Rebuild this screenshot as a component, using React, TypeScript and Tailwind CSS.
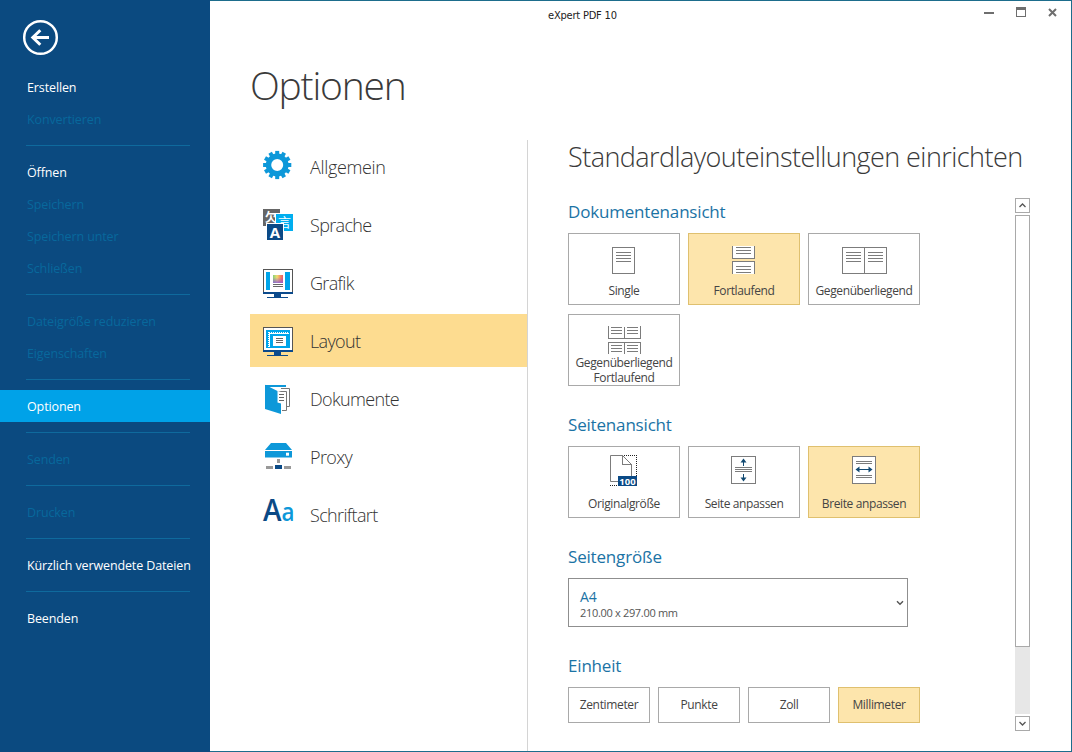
import type { ReactNode } from "react";
import { clsx } from "clsx";

type MenuEntry = {
  label: string;
  state?: "disabled" | "active";
};

const menuGroups: MenuEntry[][] = [
  [{ label: "Erstellen" }, { label: "Konvertieren", state: "disabled" }],
  [
    { label: "Öffnen" },
    { label: "Speichern", state: "disabled" },
    { label: "Speichern unter", state: "disabled" },
    { label: "Schließen", state: "disabled" },
  ],
  [
    { label: "Dateigröße reduzieren", state: "disabled" },
    { label: "Eigenschaften", state: "disabled" },
  ],
  [{ label: "Optionen", state: "active" }],
  [{ label: "Senden", state: "disabled" }],
  [{ label: "Drucken", state: "disabled" }],
  [{ label: "Kürzlich verwendete Dateien" }],
  [{ label: "Beenden" }],
];

const Sidebar = () => (
  <aside className="w-[210px] shrink-0 bg-[#0b4a80] text-[12.5px] tracking-[-0.12px] text-white">
    <button className="block pl-[22px] pt-[19px]">
      <svg width="37" height="37" viewBox="0 0 37 37" fill="none" stroke="#fff">
        <circle cx="18.5" cy="18.5" r="16.3" strokeWidth="2.5" />
        <path d="M27 18.5H11M18.3 11.2L10.8 18.5L18.3 25.8" strokeWidth="3" />
      </svg>
    </button>
    <nav className="mt-[15px]">
      {menuGroups.map((group, i) => (
        <div key={i}>
          {i > 0 && (
            <div className="flex h-[21px] items-center pl-[26px]">
              <div className="h-px w-[164px] bg-[#0f6a9d]" />
            </div>
          )}
          {group.map((entry) => (
            <div
              key={entry.label}
              className={clsx(
                "flex h-8 items-center whitespace-nowrap pl-[27px] pt-0.5",
                entry.state === "disabled" && "text-[#08689c]",
                entry.state === "active" && "bg-[#00a2e8]"
              )}
            >
              {entry.label}
            </div>
          ))}
        </div>
      ))}
    </nav>
  </aside>
);

const teeth = [0, 30, 60, 90, 120, 150, 180, 210, 240, 270, 300, 330];

const GearIcon = () => (
  <>
    <circle cx="15.2" cy="25" r="8.7" fill="none" stroke="#0d98d9" strokeWidth="5.4" />
    {teeth.map((a) => (
      <rect key={a} x="13.2" y="10.9" width="4" height="4" fill="#0d98d9" transform={`rotate(${a} 15.2 25)`} />
    ))}
  </>
);

const LanguageIcon = () => (
  <>
    <path fill="#666" d="M1 11h17v17H1z" />
    <text x="3" y="24" fontSize="12" fontWeight="700" fill="#fff" fontFamily="Noto Sans CJK SC, sans-serif">
      欠
    </text>
    <path fill="#fff" d="M13 15h19v19H13z" />
    <path fill="#00aeef" d="M14 16h17v17H14z" />
    <text x="16" y="28.5" fontSize="13" fill="#fff" fontFamily="Noto Sans CJK SC, sans-serif">
      言
    </text>
    <path fill="#fff" d="M4 25h18v18H4z" />
    <path fill="#0b4a86" d="M5 26h16v16H5z" />
    <text x="13" y="39.5" fontSize="15" fontWeight="700" fill="#fff" textAnchor="middle">
      A
    </text>
  </>
);

const Monitor = ({ children }: { children: ReactNode }) => (
  <g shapeRendering="crispEdges">
    <path fill="#555" d="M1 13h30v25H1z" />
    <path fill="#fff" d="M2 14h28v22H2z" />
    <path fill="#00a5ea" d="M4 16h24v18H4z" />
    <path fill="#0b4a8c" d="M1 36h30v2H1zM12 38h7v3h-7zM5 41h21v1H5z" />
    {children}
  </g>
);

const GraphicsIcon = () => (
  <Monitor>
    <defs>
      <linearGradient id="hue">
        <stop offset="0" stopColor="#86d07a" />
        <stop offset="0.4" stopColor="#f0dc70" />
        <stop offset="0.75" stopColor="#f58a60" />
        <stop offset="1" stopColor="#ea5a70" />
      </linearGradient>
      <linearGradient id="shade" x1="0" y1="0" x2="0" y2="1">
        <stop offset="0.3" stopColor="#a04fd0" stopOpacity="0" />
        <stop offset="1" stopColor="#8a5cd8" stopOpacity="0.85" />
      </linearGradient>
    </defs>
    <path fill="#fff" d="M8 16h15v18H8z" />
    <path fill="url(#hue)" d="M11 19h10v8H11z" />
    <path fill="url(#shade)" d="M11 19h10v8H11z" />
    <path fill="#666" d="M11 28h10v1H11zM11 30h10v1H11z" />
  </Monitor>
);

const LayoutIcon = () => (
  <Monitor>
    <path d="M7 18.5h20" stroke="#fff" strokeDasharray="1 1" />
    <path d="M6.5 18v15" stroke="#fff" strokeDasharray="1 1" />
    <path d="M7.5 33V19.5H27" stroke="#fff" fill="none" />
    <path fill="#fff" d="M11 22h13v10H11z" />
    <path fill="#666" d="M14 24h7v1h-7zM14 26h7v1h-7zM14 28h7v1h-7z" />
  </Monitor>
);

const DocumentsIcon = () => (
  <>
    <path fill="#0d98d9" d="M3 13h21v2H3z" />
    <path fill="none" stroke="#777" d="M19 16.5h8.500v18H25" />
    <path fill="#fff" stroke="#777" d="M15 19.5h9.500v19H20" />
    <path fill="#fff" d="M4 15l15 5v5H4z" />
    <path stroke="#666" d="M17 22.5h5M17 25.5h5M17 28.5h5" />
    <path fill="#0d98d9" d="M3 12.700L15.500 19v11.500L19 31.500V42L3 37z" />
  </>
);

const ProxyIcon = () => (
  <>
    <path fill="#0d98d9" d="M9 13h15l6 7H3zM3 21h27v6.500H3z" />
    <path fill="#fff" d="M24 22.700h3v3h-3z" />
    <path fill="#999" d="M15 29h3v4h-3zM4 36h7v3H4zM22 36h7v3h-7z" />
    <path fill="#0b4a86" d="M13 35h7v4h-7z" />
  </>
);

const FontIcon = () => (
  <>
    <text x="1" y="32.5" fontSize="30" fontWeight="600" fill="#0b4a86" textLength="18.5" lengthAdjust="spacingAndGlyphs">
      A
    </text>
    <text x="19.5" y="32.5" fontSize="26" fontWeight="600" fill="#0d98d9" textLength="13" lengthAdjust="spacingAndGlyphs">
      a
    </text>
  </>
);

const categories = [
  { label: "Allgemein", icon: <GearIcon /> },
  { label: "Sprache", icon: <LanguageIcon /> },
  { label: "Grafik", icon: <GraphicsIcon /> },
  { label: "Layout", icon: <LayoutIcon />, active: true },
  { label: "Dokumente", icon: <DocumentsIcon /> },
  { label: "Proxy", icon: <ProxyIcon /> },
  { label: "Schriftart", icon: <FontIcon /> },
];

const CategoryList = () => (
  <ul className="flex w-[278px] shrink-0 flex-col gap-[5px] border-r border-[#d4d4d4]">
    {categories.map(({ label, icon, active }) => (
      <li key={label} className={clsx("flex h-[53px] items-center pl-3", active && "bg-[#fddc90]")}>
        <svg width="34" height="53" viewBox="0 0 34 53">
          {icon}
        </svg>
        <span
          className={clsx(
            "ml-3.5 mt-0.5 text-[18px] font-light text-[#333]",
            label === "Allgemein" ? "tracking-[-0.35px]" : "tracking-[-0.65px]"
          )}
        >
          {label}
        </span>
      </li>
    ))}
  </ul>
);

type TileProps = {
  label: ReactNode;
  selected?: boolean;
  multiline?: boolean;
  children: ReactNode;
};

const Tile = ({ label, selected, multiline, children }: TileProps) => (
  <button
    className={clsx(
      "flex h-[72px] w-[112px] flex-col items-center border",
      selected ? "border-[#dfc06f] bg-[#fde5ac]" : "border-[#a9a9a9] bg-white"
    )}
  >
    <svg
      width="110"
      height="40"
      viewBox="1 1 110 40"
      className="shrink-0 overflow-visible"
      fill="none"
      stroke="#7c7c7c"
      shapeRendering="crispEdges"
    >
      {children}
    </svg>
    <span
      className={clsx(
        "flex h-[30px] items-end whitespace-nowrap text-[12px] leading-[15px] tracking-[-0.38px] text-[#444]",
        !multiline && "pb-1.5"
      )}
    >
      {label}
    </span>
  </button>
);

const SectionTitle = ({ children, className }: { children: ReactNode; className?: string }) => (
  <h3 className={clsx("h-6 text-[17px] leading-6 tracking-[-0.18px] text-[#1b73a5]", className)}>{children}</h3>
);

const UnitButton = ({ label, selected }: { label: string; selected?: boolean }) => (
  <button
    className={clsx(
      "h-9 w-[82px] border text-[12px] tracking-[-0.35px] text-[#444]",
      selected ? "border-[#dfc06f] bg-[#fde5ac]" : "border-[#a9a9a9]"
    )}
  >
    {label}
  </button>
);

const LayoutSettings = () => (
  <div className="w-[447px]">
    <SectionTitle className="mb-[9px]">Dokumentenansicht</SectionTitle>
    <div className="flex w-[352px] flex-wrap gap-x-2 gap-y-[9px]">
      <Tile label="Single">
        <path d="M44.5 14.5h22v26h-22z" />
        <path d="M48 19.5h15M48 22.5h15M48 25.5h15M48 28.5h15" />
      </Tile>
      <Tile label="Fortlaufend" selected>
        <path fill="#fff" d="M44.5 13v12.5h22V13M44.5 41V28.5h22V41" />
        <path d="M48 14.5h15M48 17.5h15M48 20.5h15M48 33.5h15M48 36.5h15M48 39.5h15" />
      </Tile>
      <Tile label="Gegenüberliegend">
        <path d="M34.5 14.5h44v26h-44zM56.5 14v27" />
        <path d="M38 19.5h15M38 22.5h15M38 25.5h15M38 28.5h15M60 19.5h15M60 22.5h15M60 25.5h15M60 28.5h15" />
      </Tile>
      <Tile
        multiline
        label={
          <span>
            Gegenüberliegend
            <br />
            Fortlaufend
          </span>
        }
      >
        <path d="M40.5 12v12.5h32V12M56.5 13v12M40.5 40V28.5h32V40M56.5 28v12" />
        <path d="M43 13.5h11M43 16.5h11M43 19.5h11M59 13.5h11M59 16.5h11M59 19.5h11" />
        <path d="M43 31.5h11M43 34.5h11M43 37.5h11M59 31.5h11M59 34.5h11M59 37.5h11" />
      </Tile>
    </div>

    <SectionTitle className="mb-[9px] mt-[27px]">Seitenansicht</SectionTitle>
    <div className="flex gap-2">
      <Tile label="Originalgröße">
        <path stroke="#222" strokeDasharray="1 1" d="M54 9.5h14.5V30M42 39.5h8" />
        <path fill="#fff" d="M42.5 9.5h12l9 9v17h-21z" shapeRendering="auto" />
        <path d="M54.5 9v9.5H64" />
        <path fill="#0b4a86" stroke="none" d="M50 30h19v10H50z" />
        <text x="59.5" y="38.500" fontSize="9.500" fontWeight="700" fill="#fff" stroke="none" textAnchor="middle">
          100
        </text>
      </Tile>
      <Tile label="Seite anpassen">
        <path d="M43.5 10.5h24v27h-24z" />
        <path d="M47 21.5h17M47 23.5h17M47 25.5h17" />
        <path stroke="#124a72" d="M55.5 14v6M55.5 28v6" />
        <path fill="#124a72" stroke="none" shapeRendering="auto" d="M55.5 12.5l3 4h-6zM55.5 35.5l3-4h-6z" />
      </Tile>
      <Tile label="Breite anpassen" selected>
        <path fill="#fff" d="M44.5 10.5h23v27h-23z" />
        <path d="M48 15.5h16M48 17.5h16M48 29.5h16M48 31.5h16" />
        <path stroke="#124a72" d="M50 23.5h12" />
        <path fill="#124a72" stroke="none" shapeRendering="auto" d="M47.5 23.5l4-3v6zM64.5 23.5l-4-3v6z" />
      </Tile>
    </div>

    <SectionTitle className="mb-[9px] mt-[27px]">Seitengröße</SectionTitle>
    <button className="flex h-[49px] w-[340px] items-center justify-between border border-[#8f8f8f] pl-[11px] pr-[3px] text-left">
      <span className="pt-1">
        <span className="block text-[14px] leading-4 tracking-[-0.2px] text-[#1b73a5]">A4</span>
        <span className="block text-[11px] leading-4 tracking-[-0.32px] text-[#555]">210.00 x 297.00 mm</span>
      </span>
      <svg width="8" height="6" viewBox="0 0 8 6" fill="none" stroke="#555" strokeWidth="1.4">
        <path d="M1 1.2L4 4.300L7 1.2" />
      </svg>
    </button>

    <SectionTitle className="mb-[9px] mt-[27px]">Einheit</SectionTitle>
    <div className="flex gap-2">
      <UnitButton label="Zentimeter" />
      <UnitButton label="Punkte" />
      <UnitButton label="Zoll" />
      <UnitButton label="Millimeter" selected />
    </div>
  </div>
);

const ScrollArrow = ({ d }: { d: string }) => (
  <button className="flex h-[15px] w-[15px] items-center justify-center border border-[#a9a9a9]">
    <svg width="7" height="5" viewBox="0 0 7 5" fill="none" stroke="#555" strokeWidth="1.3">
      <path d={d} />
    </svg>
  </button>
);

const Scrollbar = () => (
  <div className="mt-[-2px] flex h-[533px] w-[15px] flex-col gap-0.5">
    <ScrollArrow d="M0.5 4L3.5 1L6.5 4" />
    <div className="flex-1 bg-[#e7e7e7]">
      <div className="h-[432px] border border-[#a9a9a9] bg-white" />
    </div>
    <ScrollArrow d="M0.5 1L3.5 4L6.5 1" />
  </div>
);

const TitleBar = () => (
  <header className="flex h-[30px] items-start justify-between">
    <span className="ml-[338px] mt-[7px] font-['DejaVu_Sans_Condensed'] text-[11px] tracking-[-0.2px] text-[#222]">
      eXpert PDF 10
    </span>
    <div className="mr-[14px] mt-[6px] flex gap-[22px]">
      <svg width="10" height="11" viewBox="0 0 10 11">
        <path fill="#6e6e6e" d="M0 5h10v2H0z" />
      </svg>
      <svg width="10" height="11" viewBox="0 0 10 11">
        <path fill="#6e6e6e" d="M0 0h10v10H0zM1 3v6h8V3z" fillRule="evenodd" />
      </svg>
      <svg width="9" height="11" viewBox="0 0 9 11">
        <path d="M1 2l7 7M8 2L1 9" stroke="#6e6e6e" strokeWidth="2" />
      </svg>
    </div>
  </header>
);

export default function App() {
  return (
    <div className="flex h-[752px] w-[1072px] overflow-hidden bg-white font-['Open_Sans','Noto_Sans',sans-serif]">
      <Sidebar />
      <main className="flex flex-1 flex-col border-b border-r border-t border-[#1d6d8c]">
        <TitleBar />
        <h1 className="ml-10 h-[109px] pt-[26px] text-[39px] font-light leading-[56px] tracking-[-1.2px] text-[#3a3a3a]">
          Optionen
        </h1>
        <div className="flex flex-1 pl-10">
          <CategoryList />
          <section className="ml-10">
            <h2 className="h-[60px] whitespace-nowrap text-[27px] font-light leading-[34px] tracking-[-0.56px] text-[#3a3a3a]">
              Standardlayouteinstellungen einrichten
            </h2>
            <div className="flex">
              <LayoutSettings />
              <Scrollbar />
            </div>
          </section>
        </div>
      </main>
    </div>
  );
}
